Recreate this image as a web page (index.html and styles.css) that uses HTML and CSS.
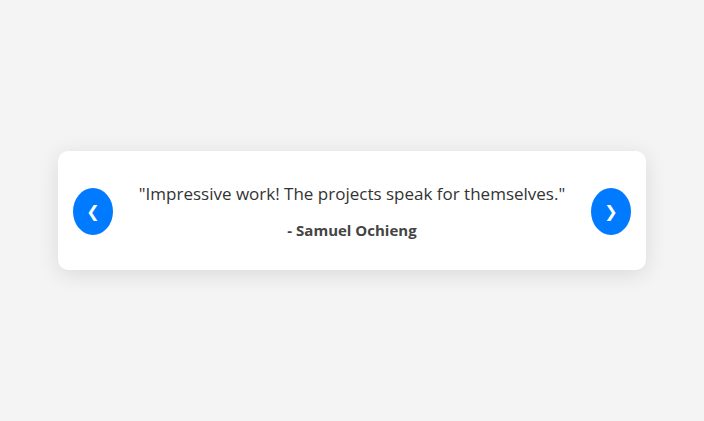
FILE: index.html
```html
<!DOCTYPE html>
<html lang="en">
<head>
<meta charset="utf-8">
<title>Testimonials</title>
<link rel="stylesheet" href="styles.css">
</head>
<body>
<div class="slider">
  <button class="nav prev" aria-label="Previous">&#10094;</button>
  <div class="testimonial">
    <p class="quote">"Impressive work! The projects speak for themselves."</p>
    <p class="author">- Samuel Ochieng</p>
  </div>
  <button class="nav next" aria-label="Next">&#10095;</button>
</div>
</body>
</html>
```
FILE: styles.css
```css
html, body {
  margin: 0;
  height: 100%;
}
body {
  background: #f4f4f4;
  font-family: "Open Sans", "Noto Sans", sans-serif;
  display: flex;
  align-items: center;
  justify-content: center;
}
.slider {
  width: 588px;
  height: 119px;
  box-sizing: border-box;
  background: #fff;
  border-radius: 10px;
  box-shadow: 0 4px 22px rgba(0, 0, 0, 0.11);
  display: flex;
  align-items: center;
  justify-content: space-between;
  padding: 0 15px;
}
.nav {
  width: 40px;
  height: 47px;
  border: none;
  border-radius: 50%;
  background: #007bff;
  color: #fff;
  font-size: 16px;
  font-family: "DejaVu Sans", sans-serif;
  padding: 0;
  display: flex;
  align-items: center;
  justify-content: center;
  flex-shrink: 0;
  margin-top: 2px;
}
.testimonial {
  text-align: center;
  flex: 1;
}
.quote {
  margin: 0 0 15px;
  font-size: 17px;
  color: #333;
}
.author {
  margin: 0;
  font-size: 15px;
  font-weight: bold;
  color: #444;
}
```
